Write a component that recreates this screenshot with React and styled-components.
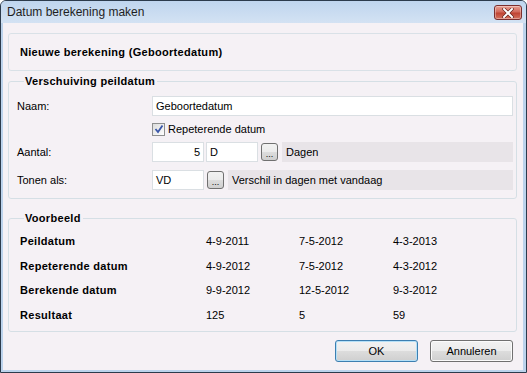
import React from 'react'
import styled, { createGlobalStyle } from 'styled-components'

const GlobalStyle = createGlobalStyle`
  html, body { margin: 0; padding: 0; background: #ffffff; }
  body { font-family: "Liberation Sans", Arial, sans-serif; font-size: 11px; color: #000; }
  * { box-sizing: border-box; }
`

const Window = styled.div`
  width: 527px;
  height: 373px;
  border: 1px solid #2c3b4c;
  border-radius: 6px 6px 0 0;
  background: #bcd3ec;
  display: flex;
  flex-direction: column;
  overflow: hidden;
`

const TitleBar = styled.div`
  height: 22px;
  flex: none;
  display: flex;
  align-items: center;
  justify-content: space-between;
  padding: 0 4px 0 6px;
  background: linear-gradient(to bottom, #bfd5ee, #d3e2f3);
  font-size: 12px;
  color: #1e1e1e;
`

const CloseButton = styled.div`
  width: 28px;
  height: 15px;
  margin-top: 1px;
  border: 1px solid #7a2e2e;
  border-radius: 3px;
  background: linear-gradient(to bottom, #e8a093 0%, #d26a5c 45%, #c04433 55%, #d4725f 100%);
  display: flex;
  align-items: center;
  justify-content: center;
  box-shadow: inset 0 0 0 1px rgba(255, 255, 255, 0.35);
`

const Client = styled.div`
  flex: 1;
  margin: 0 3px 2px 2px;
  background: #f5f1f5;
  padding: 10px 6px 0 5px;
  display: flex;
  flex-direction: column;
`

const HeaderPanel = styled.div`
  height: 38px;
  border: 1px solid #d9e1e7;
  border-radius: 3px;
  display: flex;
  align-items: center;
  padding-left: 11px;
  font-weight: bold;
  letter-spacing: 0.3px;
`

const GroupBox = styled.fieldset`
  margin: ${p => p.$top}px 0 0 0;
  border: 1px solid #d5dfe5;
  border-radius: 3px;
  padding: ${p => p.$pad};
  min-width: 0;
`

const Legend = styled.legend`
  font-weight: bold;
  letter-spacing: 0.3px;
  padding: 0 2px 0 1px;
  margin-left: 7px;
  line-height: 13px;
`

const Row = styled.div`
  display: flex;
  align-items: center;
  height: 20px;
  margin-top: ${p => p.$gap || 0}px;
`

const Label = styled.div`
  width: 135px;
  flex: none;
`

const Input = styled.div`
  height: 20px;
  width: ${p => (p.$width ? `${p.$width}px` : 'auto')};
  flex: ${p => (p.$width ? 'none' : '1')};
  background: #ffffff;
  border: 1px solid #dadfe3;
  display: flex;
  align-items: center;
  justify-content: ${p => (p.$right ? 'flex-end' : 'flex-start')};
  padding: 0 3px;
  margin-right: ${p => p.$mr || 0}px;
`

const DotsButton = styled.div`
  width: 17px;
  height: 18px;
  flex: none;
  border: 1px solid #707070;
  border-radius: 3px;
  background: linear-gradient(to bottom, #f2f2f2 0%, #ebebeb 50%, #dddddd 50%, #cfcfcf 100%);
  display: flex;
  align-items: flex-end;
  justify-content: center;
  font-size: 9px;
  line-height: 12px;
  margin-right: 4px;
`

const InfoBox = styled.div`
  flex: 1;
  height: 20px;
  background: #e8e4e8;
  display: flex;
  align-items: center;
  padding-left: 4px;
`

const CheckRow = styled.label`
  display: flex;
  align-items: center;
  height: 18px;
  margin: 4px 0 0 135px;
`

const CheckBox = styled.span`
  width: 13px;
  height: 13px;
  border: 1px solid #8e8f8f;
  background: linear-gradient(135deg, #dcdcdc, #fefefe);
  display: inline-flex;
  align-items: center;
  justify-content: center;
  margin-right: 3px;
`

const ExampleGrid = styled.div`
  display: grid;
  grid-template-columns: 186px 93px 94px 1fr;
  grid-auto-rows: 24.5px;
  align-items: center;
  padding-left: 3px;
`

const Cell = styled.div`
  font-weight: ${p => (p.$bold ? 'bold' : 'normal')};
  letter-spacing: ${p => (p.$bold ? '0.3px' : '0')};
`

const ButtonBar = styled.div`
  display: flex;
  justify-content: flex-end;
  gap: 12px;
  margin-top: 8px;
  padding-right: 4px;
`

const Button = styled.div`
  width: 83px;
  height: 22px;
  border: 1px solid ${p => (p.$default ? '#3c7fb1' : '#707070')};
  border-radius: 3px;
  background: linear-gradient(to bottom, #f2f2f2 0%, #ebebeb 50%, #dddddd 50%, #cfcfcf 100%);
  box-shadow: ${p => (p.$default ? 'inset 0 0 0 1px #b5e0f7' : 'inset 0 0 0 1px #fbfbfb')};
  display: flex;
  align-items: center;
  justify-content: center;
`

const rows = [
  ['Peildatum', '4-9-2011', '7-5-2012', '4-3-2013'],
  ['Repeterende datum', '4-9-2012', '7-5-2012', '4-3-2012'],
  ['Berekende datum', '9-9-2012', '12-5-2012', '9-3-2012'],
  ['Resultaat', '125', '5', '59'],
]

export default function App() {
  return (
    <>
      <GlobalStyle />
      <Window>
        <TitleBar>
          <span>Datum berekening maken</span>
          <CloseButton>
            <svg width="12" height="10" viewBox="0 0 12 10">
              <path d="M2 1 L10 9 M10 1 L2 9" stroke="#5a1a14" strokeWidth="3.2" strokeLinecap="square" />
              <path d="M2 1 L10 9 M10 1 L2 9" stroke="#ffffff" strokeWidth="2" strokeLinecap="square" />
            </svg>
          </CloseButton>
        </TitleBar>
        <Client>
          <HeaderPanel>Nieuwe berekening (Geboortedatum)</HeaderPanel>

          <GroupBox $top={4} $pad="8px 3px 8px 8px">
            <Legend>Verschuiving peildatum</Legend>
            <Row>
              <Label>Naam:</Label>
              <Input>Geboortedatum</Input>
            </Row>
            <CheckRow>
              <CheckBox>
                <svg width="10" height="10" viewBox="0 0 10 10">
                  <path d="M1.5 5 L4 8 L8.5 1.5" fill="none" stroke="#3a56a8" strokeWidth="1.8" />
                </svg>
              </CheckBox>
              Repeterende datum
            </CheckRow>
            <Row $gap={4}>
              <Label>Aantal:</Label>
              <Input $width={52} $right $mr={2}>5</Input>
              <Input $width={52} $mr={3}>D</Input>
              <DotsButton>...</DotsButton>
              <InfoBox>Dagen</InfoBox>
            </Row>
            <Row $gap={8}>
              <Label>Tonen als:</Label>
              <Input $width={52} $mr={3}>VD</Input>
              <DotsButton>...</DotsButton>
              <InfoBox>Verschil in dagen met vandaag</InfoBox>
            </Row>
          </GroupBox>

          <GroupBox $top={13} $pad="4px 8px 4px 8px">
            <Legend>Voorbeeld</Legend>
            <ExampleGrid>
              {rows.map(r => (
                <React.Fragment key={r[0]}>
                  <Cell $bold>{r[0]}</Cell>
                  <Cell>{r[1]}</Cell>
                  <Cell>{r[2]}</Cell>
                  <Cell>{r[3]}</Cell>
                </React.Fragment>
              ))}
            </ExampleGrid>
          </GroupBox>

          <ButtonBar>
            <Button $default>OK</Button>
            <Button>Annuleren</Button>
          </ButtonBar>
        </Client>
      </Window>
    </>
  )
}
